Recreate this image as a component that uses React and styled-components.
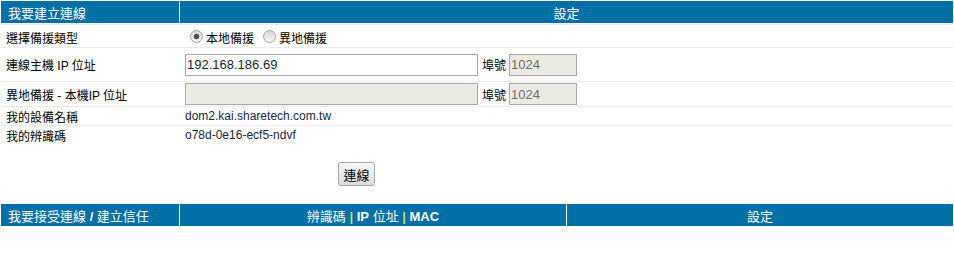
import React from "react";
import styled, { createGlobalStyle } from "styled-components";

const GlobalStyle = createGlobalStyle`
  html, body { margin: 0; padding: 0; background: #fff; }
  body {
    font-family: "Liberation Sans", "Noto Sans CJK TC", sans-serif;
    font-size: 12px;
    color: #000;
  }
`;

const Page = styled.div`
  padding: 1px;
`;

const HeaderBar = styled.div`
  display: grid;
  grid-template-columns: ${(p) => p.$cols};
  column-gap: 1px;
  height: 22px;
  margin-bottom: 1px;
`;

const HeaderCell = styled.div`
  background: #0170a7;
  color: #fff;
  font-size: 13px;
  display: flex;
  align-items: center;
  justify-content: ${(p) => (p.$center ? "center" : "flex-start")};
  padding-left: ${(p) => (p.$center ? 0 : 7)}px;
`;

const HeaderText = styled.span`
  white-space: pre;
`;

const Strong = styled.b`
  font-weight: bold;
`;

const Sep = styled.b`
  font-weight: bold;
  color: #c9d866;
`;

const Row = styled.div`
  display: grid;
  grid-template-columns: 178px 1fr;
  column-gap: 1px;
  border-top: 1px solid #ebebeb;
  height: ${(p) => p.$h}px;
`;

const LabelCell = styled.div`
  display: flex;
  align-items: center;
  padding-left: 5px;
  padding-top: ${(p) => p.$shift || 0}px;
  white-space: pre;
`;

const ValueCell = styled.div`
  display: flex;
  align-items: center;
  padding-left: 5px;
  padding-top: ${(p) => p.$shift || 0}px;
  color: #23264a;
`;

const Radio = styled.input.attrs({ type: "radio" })`
  appearance: none;
  -webkit-appearance: none;
  box-sizing: border-box;
  width: 13px;
  height: 13px;
  margin: 0 3px 3px ${(p) => p.$ml}px;
  border-radius: 50%;
  border: 1px solid #a6a6a6;
  background: linear-gradient(#d6d6d6, #f7f7f7);
  &:checked {
    background: radial-gradient(circle, #4d4d4d 0 2.2px, #8a8a8a 2.7px, transparent 3.2px),
      linear-gradient(#d6d6d6, #f7f7f7);
  }
`;

const OptionLabel = styled.label`
  display: inline-flex;
  align-items: center;
  color: #000;
  margin-right: 4px;
`;

const TextInput = styled.input`
  box-sizing: border-box;
  width: ${(p) => p.$w}px;
  height: 22px;
  margin: 0 0 0 ${(p) => p.$ml || 0}px;
  padding: 0 1px;
  border: 1px solid #a9a9a9;
  border-radius: 0;
  outline: none;
  font: 13px "Liberation Sans", sans-serif;
  color: ${(p) => (p.disabled ? "#6d6d6d" : "#1a1f3a")};
  background: ${(p) => (p.disabled ? "#ebebe4" : "#fff")};
`;

const PortLabel = styled.span`
  margin-left: 4px;
  color: #000;
`;

const ButtonRow = styled.div`
  display: flex;
  padding: 18px 0 18px 337px;
`;

const Button = styled.button`
  box-sizing: border-box;
  width: 37px;
  height: 24px;
  padding: 0;
  border: 1px solid #a8a8a8;
  border-radius: 3px;
  background: linear-gradient(#f8f8f8, #dcdcdc);
  font: 13px "Liberation Sans", "Noto Sans CJK TC", sans-serif;
  color: #000;
`;

export default function App() {
  return (
    <Page>
      <GlobalStyle />
      <HeaderBar $cols="178px 1fr">
        <HeaderCell>
          <HeaderText>我要建立連線</HeaderText>
        </HeaderCell>
        <HeaderCell $center>
          <HeaderText>設定</HeaderText>
        </HeaderCell>
      </HeaderBar>

      <Row $h={22}>
        <LabelCell $shift={3}>選擇備援類型</LabelCell>
        <ValueCell $shift={3}>
          <OptionLabel>
            <Radio name="bk" defaultChecked $ml={5} />
            本地備援
          </OptionLabel>
          <OptionLabel>
            <Radio name="bk" $ml={5} />
            異地備援
          </OptionLabel>
        </ValueCell>
      </Row>

      <Row $h={33}>
        <LabelCell>連線主機 IP 位址</LabelCell>
        <ValueCell>
          <TextInput $w={293} defaultValue="192.168.186.69" />
          <PortLabel>埠號</PortLabel>
          <TextInput $w={68} $ml={3} disabled defaultValue="1024" />
        </ValueCell>
      </Row>

      <Row $h={24}>
        <LabelCell>異地備援 - 本機IP 位址</LabelCell>
        <ValueCell>
          <TextInput $w={293} disabled defaultValue="" />
          <PortLabel>埠號</PortLabel>
          <TextInput $w={68} $ml={3} disabled defaultValue="1024" />
        </ValueCell>
      </Row>

      <Row $h={18}>
        <LabelCell>我的設備名稱</LabelCell>
        <ValueCell>dom2.kai.sharetech.com.tw</ValueCell>
      </Row>

      <Row $h={18}>
        <LabelCell>我的辨識碼</LabelCell>
        <ValueCell>o78d-0e16-ecf5-ndvf</ValueCell>
      </Row>

      <ButtonRow>
        <Button type="button">連線</Button>
      </ButtonRow>

      <HeaderBar $cols="178px 386px 1fr">
        <HeaderCell>
          <HeaderText>
            我要接受連線 <Strong>/</Strong> 建立信任
          </HeaderText>
        </HeaderCell>
        <HeaderCell $center>
          <HeaderText>
            辨識碼 <Sep>|</Sep> <Strong>IP</Strong> 位址 <Sep>|</Sep> <Strong>MAC</Strong>
          </HeaderText>
        </HeaderCell>
        <HeaderCell $center>
          <HeaderText>設定</HeaderText>
        </HeaderCell>
      </HeaderBar>
    </Page>
  );
}
